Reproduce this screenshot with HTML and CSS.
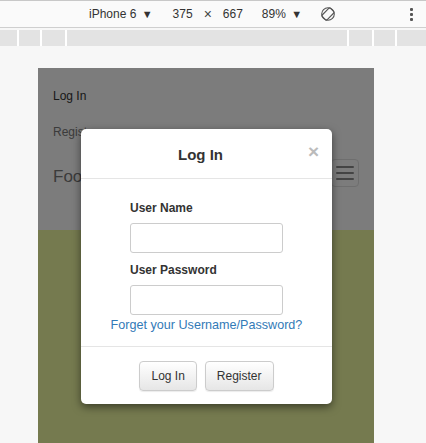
FILE: index.html
```html
<!DOCTYPE html>
<html>
<head>
<meta charset="utf-8">
<link rel="stylesheet" href="styles.css">
</head>
<body>
<div class="toolbar">
  <span class="device">iPhone 6 <span class="caret">▼</span></span>
  <span class="dim">375</span>
  <span class="times">×</span>
  <span class="dim">667</span>
  <span class="zoomv">89% <span class="caret">▼</span></span>
  <svg class="rotate" width="16" height="16" viewBox="0 0 16 16"><g fill="none" stroke="#555" stroke-width="1.1"><circle cx="8" cy="8" r="6.3"/><rect x="4.6" y="2.2" width="6.8" height="11.6" rx="1" transform="rotate(45 8 8)"/></g></svg>
  <span class="kebab"><i></i><i></i><i></i></span>
</div>
<div class="ruler">
  <div class="seg s1"></div><div class="seg s2"></div><div class="seg s3"></div>
  <div class="seg grow"></div>
  <div class="seg s4"></div><div class="seg s5"></div><div class="seg s6"></div>
</div>
<div class="stage">
  <div class="frame">
    <div class="navbar">
      <a class="nav-link first">Log In</a>
      <a class="nav-link muted">Register</a>
      <div class="brand-row">
        <span class="brand">Foo</span>
        <span class="toggle"><i></i><i></i><i></i></span>
      </div>
    </div>
    <div class="content"></div>
    <div class="backdrop"></div>
    <div class="modal">
      <div class="modal-header">
        <span class="modal-title">Log In</span>
        <span class="close">×</span>
      </div>
      <div class="modal-body">
        <div class="form">
          <label class="lbl">User Name</label>
          <div class="input"></div>
          <label class="lbl second">User Password</label>
          <div class="input"></div>
        </div>
        <a class="forgot">Forget your Username/Password?</a>
      </div>
      <div class="modal-footer">
        <button class="btn">Log In</button>
        <button class="btn">Register</button>
      </div>
    </div>
  </div>
</div>
</body>
</html>
```
FILE: styles.css
```css
html, body { margin: 0; padding: 0; }
body {
  width: 426px; height: 443px; overflow: hidden;
  font-family: "Liberation Sans", Arial, sans-serif;
  background: #f7f7f7;
  color: #333;
}
.toolbar {
  height: 28px;
  box-sizing: border-box;
  border-top: 1px solid #c8c8c8;
  border-bottom: 1px solid #cfcfcf;
  background: #fafafa;
  display: flex; align-items: center;
  font-size: 12px; color: #333;
  position: relative;
}
.device { margin-left: 89px; }
.device, .zoomv { color: #333; }
.caret { font-size: 11px; margin-left: 2px; }
.dim { margin-left: 20px; }
.times { margin-left: 11px; font-size: 14px; color: #444; }
.times + .dim { margin-left: 11px; }
.zoomv { margin-left: 19px; }
.rotate { margin-left: 18px; }
.kebab { margin-left: auto; margin-right: 13px; display: flex; flex-direction: column; gap: 2px; }
.kebab i { display: block; width: 3px; height: 3px; background: #555; border-radius: 1px; }
.ruler {
  margin-top: 2px;
  height: 16px;
  display: flex; gap: 2px;
  background: #fff;
}
.seg { background: #e3e3e3; height: 16px; }
.s1 { width: 17px; }
.s2 { width: 21px; }
.s3 { width: 23px; }
.grow { flex: 1; }
.s4 { width: 23px; }
.s5 { width: 21px; }
.s6 { width: 29px; }
.stage {
  padding-top: 22px;
  padding-left: 38px;
}
.frame {
  position: relative;
  width: 336px;
  height: 380px;
  background: #ebf59f;
}
.navbar {
  height: 162px;
  background: #f8f8f8;
  box-sizing: border-box;
  padding: 20px 14px 0 15px;
}
.nav-link { display: block; font-size: 12px; color: #333; height: 36px; line-height: 16px; }
.nav-link.muted { color: #777; }
.brand-row { display: flex; align-items: center; justify-content: space-between; margin-top: 6px; }
.brand { font-size: 17px; color: #777; }
.toggle {
  width: 28px; height: 28px; box-sizing: border-box;
  border: 1px solid #ddd; border-radius: 4px;
  display: flex; flex-direction: column; justify-content: center; align-items: center; gap: 4px;
  margin-top: -7px; margin-right: 1px;
}
.toggle i { display: block; width: 18px; height: 2px; background: #888; border-radius: 1px; }
.content { height: 218px; }
.backdrop { position: absolute; inset: 0; background: rgba(0,0,0,0.5); }
.modal {
  position: absolute;
  left: 43px; top: 61px;
  width: 251px; height: 275px;
  background: #fff;
  border-radius: 5px;
  box-shadow: 0 3px 9px rgba(0,0,0,0.5);
  display: flex; flex-direction: column;
}
.modal-header {
  height: 50px; box-sizing: border-box;
  border-bottom: 1px solid #e5e5e5;
  display: flex; align-items: center; justify-content: center;
  position: relative;
}
.modal-title { font-size: 15px; font-weight: bold; color: #333; margin-top: 1px; margin-right: 12px; }
.close {
  position: absolute; right: 13px; top: 13px;
  font-size: 19px; font-weight: bold; color: #bbb; line-height: 19px;
}
.modal-body {
  height: 168px; box-sizing: border-box;
  border-bottom: 1px solid #e5e5e5;
  padding-top: 22px;
  display: flex; flex-direction: column; align-items: center;
}
.form { width: 153px; display: flex; flex-direction: column; }
.lbl { font-size: 12px; font-weight: bold; color: #333; line-height: 14px; height: 14px; margin-bottom: 8px; }
.lbl.second { margin-top: 10px; margin-bottom: 8px; }
.input { height: 30px; box-sizing: border-box; border: 1px solid #ccc; border-radius: 3px; background: #fff; }
.forgot { font-size: 12.6px; color: #337ab7; margin-top: 3px; line-height: 15px; }
.modal-footer {
  flex: 1;
  display: flex; justify-content: center; align-items: flex-start; gap: 8px;
  padding-top: 14px;
}
.btn {
  font-family: "Liberation Sans", Arial, sans-serif;
  font-size: 12px; color: #333;
  height: 30px; padding: 0 11px;
  border: 1px solid #ccc; border-radius: 4px;
  background: linear-gradient(#fff, #e6e6e6);
  box-shadow: 0 1px 1px rgba(0,0,0,0.08);
}
```
